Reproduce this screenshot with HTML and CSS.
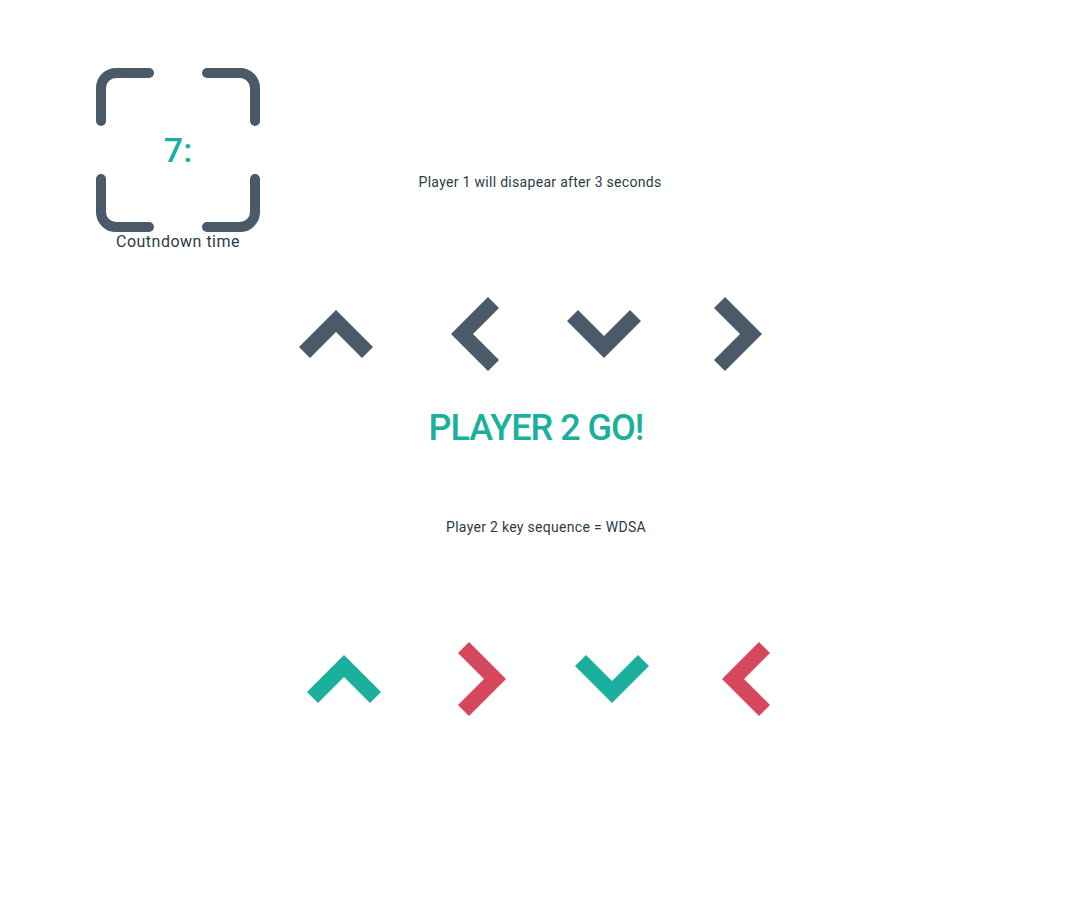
FILE: index.html
```html
<!DOCTYPE html>
<html lang="en">
<head>
  <meta charset="UTF-8">
  <meta name="viewport" content="width=device-width, initial-scale=1.0">
  <title>Arrow Memory Game</title>
  <link rel="stylesheet" href="styles.css">
</head>
<body>
  <!-- top: countdown + notice -->
  <div class="top">
    <div class="countdown">
      <div class="frame">
        <svg width="164" height="164" viewBox="0 0 164 164">
          <g fill="none" stroke="#4a5a69" stroke-width="10" stroke-linecap="round">
            <path d="M5 53 V20 A15 15 0 0 1 20 5 H53"/>
            <path d="M111 5 H144 A15 15 0 0 1 159 20 V53"/>
            <path d="M5 111 V144 A15 15 0 0 0 20 159 H53"/>
            <path d="M111 159 H144 A15 15 0 0 0 159 144 V111"/>
          </g>
        </svg>
        <div class="count">7:</div>
      </div>
      <div class="count-label">Coutndown time</div>
    </div>
    <p class="notice">Player 1 will disapear after 3 seconds</p>
  </div>

  <!-- player 1 sequence -->
  <div class="arrows">
    <div class="arrow"><svg width="74" height="48" viewBox="0 0 74 48"><polygon class="slate" points="0,37 37,0 74,37 63,48 37,22 11,48"/></svg></div>
    <div class="arrow shift"><svg width="48" height="74" viewBox="0 0 48 74"><polygon class="slate" points="37,0 48,11 22,37 48,63 37,74 0,37"/></svg></div>
    <div class="arrow"><svg width="74" height="48" viewBox="0 0 74 48"><polygon class="slate" points="0,11 11,0 37,26 63,0 74,11 37,48"/></svg></div>
    <div class="arrow"><svg width="48" height="74" viewBox="0 0 48 74"><polygon class="slate" points="11,0 48,37 11,74 0,63 26,37 0,11"/></svg></div>
  </div>

  <h1 class="go">PLAYER 2 GO!</h1>
  <p class="sequence">Player 2 key sequence = WDSA</p>

  <!-- player 2 answer -->
  <div class="arrows arrows-answer">
    <div class="arrow"><svg width="74" height="48" viewBox="0 0 74 48"><polygon class="ok" points="0,37 37,0 74,37 63,48 37,22 11,48"/></svg></div>
    <div class="arrow shift"><svg width="48" height="74" viewBox="0 0 48 74"><polygon class="bad" points="11,0 48,37 11,74 0,63 26,37 0,11"/></svg></div>
    <div class="arrow"><svg width="74" height="48" viewBox="0 0 74 48"><polygon class="ok" points="0,11 11,0 37,26 63,0 74,11 37,48"/></svg></div>
    <div class="arrow"><svg width="48" height="74" viewBox="0 0 48 74"><polygon class="bad" points="37,0 48,11 22,37 48,63 37,74 0,37"/></svg></div>
  </div>
</body>
</html>
```

FILE: styles.css
```css
body {
  margin: 0;
  font-family: Roboto, "Liberation Sans", sans-serif;
  color: #2c3a48;
  background: #fff;
}
/* top area */
.top {
  display: grid;
  grid-template-columns: 1fr auto 1fr;
  padding-top: 68px;
}
.countdown {
  padding-left: 96px;
  width: 164px;
}
.frame {
  position: relative;
  width: 164px;
  height: 164px;
}
.frame svg {
  display: block;
}
.count {
  position: absolute;
  inset: 0;
  display: flex;
  align-items: center;
  justify-content: center;
  font-size: 34px;
  font-weight: 500;
  color: #1bb09d;
}
.count-label {
  font-size: 16px;
  line-height: 20px;
  letter-spacing: 0.5px;
  text-align: center;
}
.notice {
  margin: 104px 0 0;
  font-size: 14px;
  line-height: 20px;
  letter-spacing: 0.3px;
}
/* arrow rows */
.arrows {
  display: flex;
  justify-content: center;
  gap: 60px;
  margin-top: 45px;
  padding-right: 6px;
}
.arrow {
  width: 74px;
  height: 74px;
  display: flex;
  align-items: center;
  justify-content: center;
}
.arrow svg {
  display: block;
}
.arrow.shift svg {
  margin-left: 10px;
}
.slate { fill: #4a5a69; }
.ok { fill: #1bb09d; }
.bad { fill: #d4475d; }
.arrows-answer {
  margin-top: 105px;
  padding-right: 0;
  padding-left: 10px;
}
.arrows-answer .arrow.shift svg {
  margin-left: 8px;
}
.go {
  margin: 35px 0 0;
  padding-right: 8px;
  font-size: 36px;
  line-height: 44px;
  font-weight: 500;
  letter-spacing: -1px;
  color: #1bb09d;
  text-align: center;
}
.sequence {
  margin: 67px 0 0;
  font-size: 14px;
  line-height: 20px;
  letter-spacing: 0.3px;
  text-align: center;
  padding-left: 12px;
}
```
